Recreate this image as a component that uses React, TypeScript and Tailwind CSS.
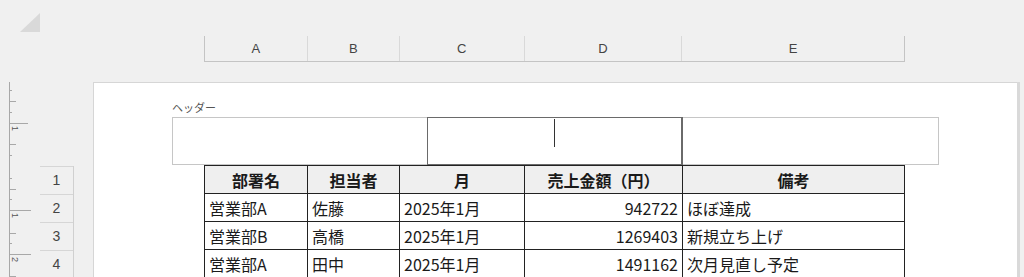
import React from 'react';

const columns = [
  { label: 'A', width: 'w-[103px]' },
  { label: 'B', width: 'w-[92px]' },
  { label: 'C', width: 'w-[125px]' },
  { label: 'D', width: 'w-[158px]' },
  { label: 'E', width: 'w-[222px]' },
];

const rows = [
  { dept: '営業部A', person: '佐藤', month: '2025年1月', amount: '942722', note: 'ほぼ達成' },
  { dept: '営業部B', person: '高橋', month: '2025年1月', amount: '1269403', note: '新規立ち上げ' },
  { dept: '営業部A', person: '田中', month: '2025年1月', amount: '1491162', note: '次月見直し予定' },
];

// vertical ruler ticks (y relative to page top), len in px
const ticks = [
  { y: 8, len: 3 },
  { y: 19, len: 7 },
  { y: 30, len: 3 },
  { y: 41, len: 19, label: '1' },
  { y: 62, len: 7 },
  { y: 73, len: 3 },
  { y: 96, len: 3 },
  { y: 107, len: 7 },
  { y: 117, len: 3 },
  { y: 128, len: 22, label: '1' },
  { y: 151, len: 7 },
  { y: 161, len: 3 },
  { y: 172, len: 22, label: '2' },
  { y: 194, len: 7 },
];

const Ruler = () => (
  <svg width="40" height="195" className="shrink-0">
    <line x1="9.5" y1="0" x2="9.5" y2="195" stroke="#a8a8a8" strokeWidth="1" />
    {ticks.map((t, i) => (
      <g key={i}>
        <line x1="9" y1={t.y + 0.5} x2={9 + t.len} y2={t.y + 0.5} stroke="#a8a8a8" strokeWidth="1" />
        {t.label && (
          <text
            x="0"
            y="0"
            fontSize="9"
            fill="#555"
            fontFamily="'Liberation Sans', sans-serif"
            transform={`translate(12 ${t.y + 3}) rotate(90)`}
          >
            {t.label}
          </text>
        )}
      </g>
    ))}
  </svg>
);

const App = () => {
  return (
    <div className="w-[1024px] h-[277px] overflow-hidden bg-[#f0f0f0] flex flex-col font-['Noto_Sans_CJK_JP',sans-serif]">
      {/* top corner + column headers */}
      <div className="h-[82px] shrink-0 flex flex-col">
        <div className="pt-[13px] pl-[20px]">
          <svg width="20" height="19">
            <polygon points="20,0 20,19 0,19" fill="#d9d9d9" />
          </svg>
        </div>
        <div className="mt-[4px] ml-[204px] flex h-[26px] w-[701px] border-b border-l border-[#c4c4c4] border-r">
          {columns.map((c, i) => (
            <div
              key={c.label}
              className={`${c.width} flex items-center justify-center text-[13px] text-[#444] font-['Liberation_Sans',sans-serif] ${i < columns.length - 1 ? 'border-r border-[#d9d9d9]' : ''}`}
            >
              {c.label}
            </div>
          ))}
        </div>
      </div>

      {/* page area */}
      <div className="flex flex-1">
        <Ruler />
        <div className="w-[34px] shrink-0 mt-[84px] border-r border-[#d0d0d0] flex flex-col">
          {[1, 2, 3, 4].map((n) => (
            <div
              key={n}
              className="h-[28px] shrink-0 border-t border-[#d6d6d6] flex items-center justify-center text-[14px] text-[#444] font-['Liberation_Sans',sans-serif]"
            >
              {n}
            </div>
          ))}
        </div>
        <div className="w-[19px] shrink-0" />
        <div className="w-[924px] shrink-0 bg-white border-t border-l border-[#d6d6d6] pl-[78px] pt-[17px]">
          <div className="h-[15px] text-[11px] leading-[15px] text-[#555]">ヘッダー</div>
          <div className="mt-[2px] w-[767px] h-[48px] flex border border-[#c6c6c6]">
            <div className="w-[254px]" />
            <div className="relative w-[256px] border border-r-2 border-[#6a6a6a] -my-px">
              <div className="absolute left-[126px] top-[1px] w-px h-[28px] bg-[#333]" />
            </div>
            <div className="flex-1" />
          </div>
          <table className="ml-[32px] table-fixed border-collapse text-[16px] text-[#1a1a1a]">
            <colgroup>
              <col className="w-[103px]" />
              <col className="w-[92px]" />
              <col className="w-[125px]" />
              <col className="w-[158px]" />
              <col className="w-[222px]" />
            </colgroup>
            <thead>
              <tr className="h-[28px] bg-[#efefef]">
                {['部署名', '担当者', '月', '売上金額（円）', '備考'].map((h) => (
                  <th key={h} className="border border-[#222] p-0 font-bold text-center leading-none">
                    {h}
                  </th>
                ))}
              </tr>
            </thead>
            <tbody>
              {rows.map((r, i) => (
                <tr key={i} className="h-[28px]">
                  <td className="border border-[#222] px-[4px] py-0 leading-none">{r.dept}</td>
                  <td className="border border-[#222] px-[4px] py-0 leading-none">{r.person}</td>
                  <td className="border border-[#222] px-[4px] py-0 leading-none">{r.month}</td>
                  <td className="border border-[#222] px-[4px] py-0 leading-none text-right">{r.amount}</td>
                  <td className="border border-[#222] px-[4px] py-0 leading-none">{r.note}</td>
                </tr>
              ))}
            </tbody>
          </table>
        </div>
        <div className="w-[3px] shrink-0 mt-0 bg-[#d9d9d9]" />
      </div>
    </div>
  );
};

export default App;
